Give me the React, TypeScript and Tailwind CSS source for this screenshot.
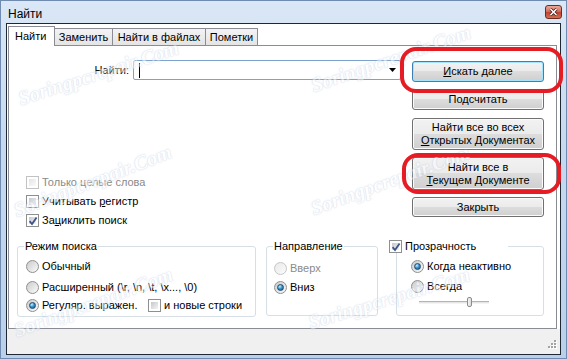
import React from "react"

// Notepad++ "Найти" dialog on Windows 7 (Aero), with the red annotation marks of the screenshot.

function CheckBox({ checked = false, disabled = false }: { checked?: boolean; disabled?: boolean }) {
	return (
		<span
			className={`relative flex h-[13px] w-[13px] shrink-0 border bg-white p-[2px] ${
				disabled ? "border-[#c2c2c2]" : "border-[#8e8f8f]"
			}`}>
			<span
				className={`h-full w-full ${
					disabled
						? "bg-[linear-gradient(135deg,#e4e4e4,#fafafa)]"
						: "bg-[linear-gradient(135deg,#c4c8ce,#f4f4f4)]"
				}`}
			/>
			{checked && (
				<svg className="absolute left-[1px] top-[1px]" width="10" height="10" viewBox="0 0 10 10">
					<path d="M1.6 5.2 L4 8 L8.6 1.4" fill="none" stroke="#3e5488" strokeWidth="1.8" />
				</svg>
			)}
		</span>
	)
}

function Radio({ checked = false, disabled = false }: { checked?: boolean; disabled?: boolean }) {
	return (
		<span
			className={`flex h-[13px] w-[13px] shrink-0 items-center justify-center rounded-full border ${
				disabled
					? "border-[#c6c6c6] bg-[linear-gradient(135deg,#e9e9e9,#fbfbfb)]"
					: "border-[#8e8f8f] bg-[linear-gradient(135deg,#cbcbcb,#fbfbfb)]"
			}`}>
			{checked && (
				<span className="h-[7px] w-[7px] rounded-full border border-[#1b4b73] bg-[radial-gradient(circle_at_35%_30%,#c8f1ff_0%,#3c9ad3_45%,#0d4a78_100%)]" />
			)}
		</span>
	)
}

function Btn({ children, def = false, className = "" }: { children: React.ReactNode; def?: boolean; className?: string }) {
	return (
		<div
			className={`flex w-full flex-col items-center justify-center rounded-[3px] border text-center leading-[13px] bg-[linear-gradient(#f2f2f2_0%,#ebebeb_49%,#dddddd_50%,#cfcfcf_100%)] ${
				def ? "border-[#3c7fb1] shadow-[inset_0_0_0_1px_#a3e3fd]" : "border-[#707070] shadow-[inset_0_0_0_1px_#fbfbfb]"
			} ${className}`}>
			{children}
		</div>
	)
}

function Row({ children }: { children: React.ReactNode }) {
	return <div className="flex h-[13px] items-center gap-[3px] leading-[13px]">{children}</div>
}

const u = "underline decoration-1 underline-offset-[1px]"

export default function App() {
	return (
		<div className="relative h-[359px] w-[567px] overflow-hidden border border-[#6f8cb0] bg-[linear-gradient(#dae7f6,#c6d9ef_40%,#bad0ea)] font-['Liberation_Sans',Arial,sans-serif] text-[11px] text-black">
			{/* title bar */}
			<div className="flex h-[22px] items-start justify-between">
				<span className="pl-[7px] pt-[6px] text-[12px] leading-[14px]">Найти</span>
				<div className="mr-[4px] mt-[4px] flex h-[14px] w-[17px] items-center justify-center rounded-[3px] border border-[#6d2b24] bg-[linear-gradient(#eaa99b,#d3715f_45%,#c0402f_50%,#d27050)]">
					<svg width="9" height="8" viewBox="0 0 9 8">
						<path d="M1.5 1L7.5 7M7.5 1L1.5 7" stroke="#40170f" strokeWidth="3" />
						<path d="M1.5 1L7.5 7M7.5 1L1.5 7" stroke="#fff" strokeWidth="1.6" />
					</svg>
				</div>
			</div>

			{/* client area */}
			<div className="ml-[5px] flex h-[332px] w-[555px] flex-col border border-[#1e2733] bg-white">
				{/* tabs */}
				<div className="relative z-10 -mb-px flex h-[22px] items-end pl-[1px]">
					<div className="h-[20px] w-[47px] border border-b-0 border-[#898c95] bg-white pl-[6px] pt-[3px] leading-[13px]">
						Найти
					</div>
					<div className="-ml-px mb-px flex h-[17px] w-[59px] items-center justify-center border border-b-0 border-[#898c95] bg-[linear-gradient(#f3f3f3,#e4e4e4)] leading-[13px]">
						Заменить
					</div>
					<div className="-ml-px mb-px flex h-[17px] w-[94px] items-center justify-center border border-b-0 border-[#898c95] bg-[linear-gradient(#f3f3f3,#e4e4e4)] leading-[13px]">
						Найти в файлах
					</div>
					<div className="-ml-px mb-px flex h-[17px] w-[53px] items-center justify-center border border-b-0 border-[#898c95] bg-[linear-gradient(#f3f3f3,#e4e4e4)] leading-[13px]">
						Пометки
					</div>
				</div>

				{/* tab page */}
				<div className="ml-[1px] flex h-[284px] w-[549px] flex-col border border-[#898c95] bg-white pl-[8px] pr-[12px] pt-[14px]">
					<div className="flex">
						<div className="flex w-[395px] flex-col">
							<div className="flex h-[20px] items-center">
								<span className="w-[112px] text-right leading-[13px]">Найти:</span>
								<div className="ml-[4px] flex h-[20px] w-[268px] items-center justify-between rounded-[2px] border border-[#7da2ce] bg-white pl-[5px] pr-[4px]">
									<span className="h-[15px] w-px bg-black" />
									<svg width="7" height="4" viewBox="0 0 7 4">
										<path d="M0 0H7L3.5 4Z" fill="#000" />
									</svg>
								</div>
							</div>
							<div className="ml-[9px] mt-[96px] flex flex-col gap-[6px]">
								<Row>
									<CheckBox disabled />
									<span className="text-[#8a8a8a]">Только целые слова</span>
								</Row>
								<Row>
									<CheckBox />
									<span>
										Учитывать <span className={u}>р</span>егистр
									</span>
								</Row>
								<Row>
									<CheckBox checked />
									<span>
										За<span className={u}>ц</span>иклить поиск
									</span>
								</Row>
							</div>
						</div>

						<div className="flex w-[132px] flex-col pt-[1px]">
							<Btn def className="h-[21px]">
								<span>
									<span className={u}>И</span>скать далее
								</span>
							</Btn>
							<Btn className="mt-[7px] h-[21px]">Подсчитать</Btn>
							<Btn className="mt-[8px] h-[32px]">
								<span>Найти все во всех</span>
								<span>
									<span className={u}>О</span>ткрытых Документах
								</span>
							</Btn>
							<Btn className="mt-[7px] h-[33px]">
								<span>Найти все в</span>
								<span>
									<span className={u}>Т</span>екущем Документе
								</span>
							</Btn>
							<Btn className="mt-[7px] h-[20px]">Закрыть</Btn>
						</div>
					</div>

					{/* group boxes */}
					<div className="mt-[19px] flex items-start">
						<div className="relative h-[71px] w-[239px] rounded-[3px] border border-[#d5dfe5] pl-[8px] pt-[13px]">
							<span className="absolute left-[6px] top-[-7px] bg-white px-[1px] leading-[13px]">Режим поиска</span>
							<Row>
								<Radio />
								<span>Обычный</span>
							</Row>
							<div className="mt-[8px]">
								<Row>
									<Radio />
									<span>{"Расширенный (\\r, \\n, \\t, \\x..., \\0)"}</span>
								</Row>
							</div>
							<div className="mt-[5px] flex items-center">
								<div className="w-[122px]">
									<Row>
										<Radio checked />
										<span>Регуляр. выражен.</span>
									</Row>
								</div>
								<Row>
									<CheckBox />
									<span>и новые строки</span>
								</Row>
							</div>
						</div>

						<div className="relative ml-[10px] h-[70px] w-[112px] rounded-[3px] border border-[#d5dfe5] pl-[7px] pt-[15px]">
							<span className="absolute left-[6px] top-[-7px] bg-white px-[1px] leading-[13px]">Направление</span>
							<Row>
								<Radio disabled />
								<span className="text-[#8a8a8a]">Вверх</span>
							</Row>
							<div className="mt-[6px]">
								<Row>
									<Radio checked />
									<span>Вниз</span>
								</Row>
							</div>
						</div>

						<div className="relative ml-[18px] h-[70px] w-[148px] rounded-[3px] border border-[#d5dfe5] pl-[14px] pt-[13px]">
							<div className="absolute left-[-8px] top-[-7px] flex h-[13px] w-[119px] items-center gap-[3px] bg-white leading-[13px]">
								<CheckBox checked />
								<span>Прозрачность</span>
							</div>
							<Row>
								<Radio checked />
								<span>Когда неактивно</span>
							</Row>
							<div className="mt-[7px]">
								<Row>
									<Radio />
									<span>Всегда</span>
								</Row>
							</div>
							<div className="ml-[8px] mt-[4px] flex h-[10px] w-[70px] items-center">
								<span className="h-[3px] w-[48px] border-y border-t-[#b4b4b4] border-b-[#f4f4f4] bg-[#e6e6e6]" />
								<span className="h-[10px] w-[5px] rounded-[2px] border border-[#8c8c8c] bg-[linear-gradient(90deg,#f6f6f6,#dcdcdc)]" />
								<span className="h-[3px] flex-1 border-y border-t-[#b4b4b4] border-b-[#f4f4f4] bg-[#e6e6e6]" />
							</div>
						</div>
					</div>
				</div>

				{/* status strip */}
				<div className="flex h-[25px] items-end justify-end bg-[#f0f0f0] pb-[5px] pr-[3px]">
					<svg width="9" height="9" viewBox="0 0 9 9">
						<g fill="#fff">
							<rect x="7" y="1" width="2" height="2" />
							<rect x="4" y="4" width="2" height="2" />
							<rect x="7" y="4" width="2" height="2" />
							<rect x="1" y="7" width="2" height="2" />
							<rect x="4" y="7" width="2" height="2" />
							<rect x="7" y="7" width="2" height="2" />
						</g>
						<g fill="#a3a3a3">
							<rect x="6" y="0" width="2" height="2" />
							<rect x="3" y="3" width="2" height="2" />
							<rect x="6" y="3" width="2" height="2" />
							<rect x="0" y="6" width="2" height="2" />
							<rect x="3" y="6" width="2" height="2" />
							<rect x="6" y="6" width="2" height="2" />
						</g>
					</svg>
				</div>
			</div>

			{/* watermarks */}
			<span className="pointer-events-none absolute left-[21px] top-[87px] origin-bottom-left rotate-[-18deg] whitespace-nowrap font-['Liberation_Serif',serif] text-[20px] font-bold italic leading-[20px] text-white opacity-50 [text-shadow:0_0_1px_#9cafd4,0_0_2px_#bfcbe2]">
				Soringpcrepair.Com
			</span>
			<span className="pointer-events-none absolute left-[17px] top-[199px] origin-bottom-left rotate-[-21deg] whitespace-nowrap font-['Liberation_Serif',serif] text-[20px] font-bold italic leading-[20px] text-white opacity-50 [text-shadow:0_0_1px_#9cafd4,0_0_2px_#bfcbe2]">
				Soringpcrepair.Com
			</span>
			<span className="pointer-events-none absolute left-[314px] top-[74px] origin-bottom-left rotate-[-19deg] whitespace-nowrap font-['Liberation_Serif',serif] text-[20px] font-bold italic leading-[20px] text-white opacity-50 [text-shadow:0_0_1px_#9cafd4,0_0_2px_#bfcbe2]">
				Soringpcrepair.Com
			</span>
			<span className="pointer-events-none absolute left-[314px] top-[197px] origin-bottom-left rotate-[-20deg] whitespace-nowrap font-['Liberation_Serif',serif] text-[20px] font-bold italic leading-[20px] text-white opacity-50 [text-shadow:0_0_1px_#9cafd4,0_0_2px_#bfcbe2]">
				Soringpcrepair.Com
			</span>
			<span className="pointer-events-none absolute left-[17px] top-[319px] origin-bottom-left rotate-[-20deg] whitespace-nowrap font-['Liberation_Serif',serif] text-[20px] font-bold italic leading-[20px] text-white opacity-50 [text-shadow:0_0_1px_#9cafd4,0_0_2px_#bfcbe2]">
				Soringpcrepair.Com
			</span>
			<span className="pointer-events-none absolute left-[311px] top-[311px] origin-bottom-left rotate-[-17deg] whitespace-nowrap font-['Liberation_Serif',serif] text-[20px] font-bold italic leading-[20px] text-white opacity-50 [text-shadow:0_0_1px_#9cafd4,0_0_2px_#bfcbe2]">
				Soringpcrepair.Com
			</span>

			{/* red annotation marks */}
			<div className="pointer-events-none absolute left-[399px] top-[46px] h-[46px] w-[163px] rounded-[16px] border-[4px] border-[#e51c23]" />
			<div className="pointer-events-none absolute left-[401px] top-[152px] h-[41px] w-[159px] rounded-[16px] border-[4px] border-[#e51c23]" />
		</div>
	)
}
